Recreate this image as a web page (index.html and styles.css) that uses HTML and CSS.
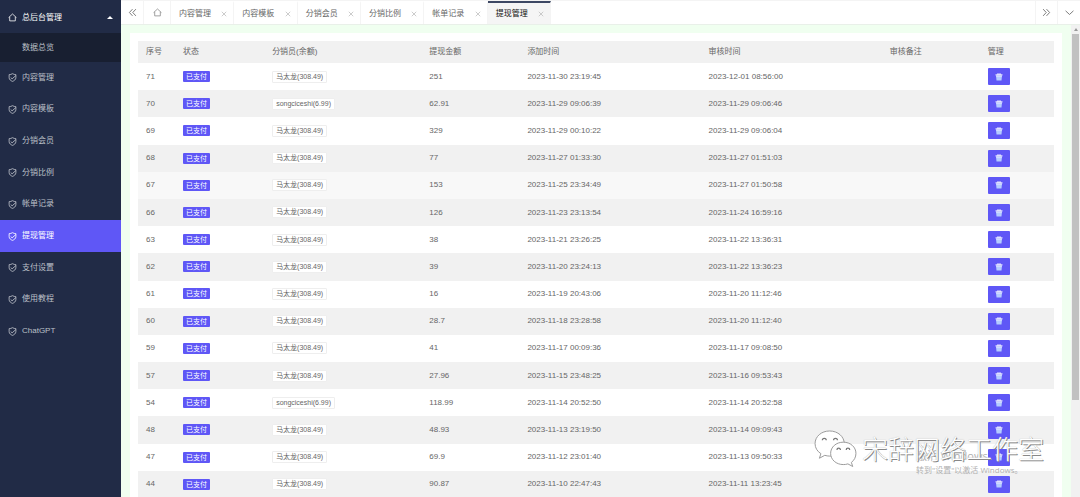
FILE: index.html
```html
<!DOCTYPE html>
<html lang="zh-CN">
<head>
<meta charset="utf-8">
<title>提现管理</title>
<link rel="stylesheet" href="styles.css">
</head>
<body>
<svg class="defs" aria-hidden="true">
  <symbol id="home" viewBox="0 0 16 16"><path d="M1 8.2 8 1.8l7 6.4M3 7v7h10V7" fill="none" stroke="currentColor" stroke-width="1.4" stroke-linejoin="round"/></symbol>
  <symbol id="shield" viewBox="0 0 16 16"><path d="M8 1.2c2 1.300 4 1.700 6 1.700v5.300c0 3.400-3 5.600-6 6.700-3-1.100-6-3.300-6-6.700V2.900c2 0 4-.4 6-1.700zM4.800 8l2.500 2.400L14 4.500" fill="none" stroke="currentColor" stroke-width="1.500" stroke-linejoin="round"/></symbol>
  <symbol id="left" viewBox="0 0 16 16"><path d="M8 2 2.500 8 8 14M14 2 8.500 8l5.500 6" fill="none" stroke="currentColor" stroke-width="1.500"/></symbol>
  <symbol id="right" viewBox="0 0 16 16"><path d="m2 2 5.500 6L2 14M8 2l5.500 6L8 14" fill="none" stroke="currentColor" stroke-width="1.500"/></symbol>
  <symbol id="down" viewBox="0 0 16 16"><path d="m1 5 7 6.500L15 5" fill="none" stroke="currentColor" stroke-width="1.500"/></symbol>
  <symbol id="close" viewBox="0 0 16 16"><path d="m2 2 12 12M14 2 2 14" fill="none" stroke="currentColor" stroke-width="2"/></symbol>
  <symbol id="trash" viewBox="0 0 16 16"><path d="M1 5V2.500h3V1h8v1.500h3V5z" fill="#dfe0ff"/><path d="M2 5h12l-1 10H3z" fill="#b4ccff"/><path d="M2 5h12l-.2 2H2.200z" fill="#e9eaff"/></symbol>
</svg>
<div class="app">
  <aside class="side">
    <a class="side-title" href="#"><svg class="ico"><use href="#home"/></svg><span>总后台管理</span><i class="caret"></i></a>
    <a class="side-sub" href="#">数据总览</a>
    <nav class="menu">
      <a href="#"><svg class="ico"><use href="#shield"/></svg>内容管理</a>
      <a href="#"><svg class="ico"><use href="#shield"/></svg>内容模板</a>
      <a href="#"><svg class="ico"><use href="#shield"/></svg>分销会员</a>
      <a href="#"><svg class="ico"><use href="#shield"/></svg>分销比例</a>
      <a href="#"><svg class="ico"><use href="#shield"/></svg>帐单记录</a>
      <a href="#" class="active"><svg class="ico"><use href="#shield"/></svg>提现管理</a>
      <a href="#"><svg class="ico"><use href="#shield"/></svg>支付设置</a>
      <a href="#"><svg class="ico"><use href="#shield"/></svg>使用教程</a>
      <a href="#"><svg class="ico"><use href="#shield"/></svg>ChatGPT</a>
    </nav>
  </aside>
  <main class="main">
    <header class="bar">
      <button class="nav first" aria-label="向左"><svg class="ico"><use href="#left"/></svg></button>
      <a class="nav home" href="#" aria-label="首页"><svg class="ico"><use href="#home"/></svg></a>
      <div class="tabs">
        <div class="tab"><a href="#">内容管理</a><button aria-label="关闭"><svg><use href="#close"/></svg></button></div>
        <div class="tab"><a href="#">内容模板</a><button aria-label="关闭"><svg><use href="#close"/></svg></button></div>
        <div class="tab"><a href="#">分销会员</a><button aria-label="关闭"><svg><use href="#close"/></svg></button></div>
        <div class="tab"><a href="#">分销比例</a><button aria-label="关闭"><svg><use href="#close"/></svg></button></div>
        <div class="tab"><a href="#">帐单记录</a><button aria-label="关闭"><svg><use href="#close"/></svg></button></div>
        <div class="tab current"><a href="#">提现管理</a><button aria-label="关闭"><svg><use href="#close"/></svg></button></div>
      </div>
      <button class="nav next" aria-label="向右"><svg class="ico"><use href="#right"/></svg></button>
      <button class="nav more" aria-label="更多"><svg class="ico"><use href="#down"/></svg></button>
    </header>
    <div class="body">
      <section class="panel">
        <table class="list">
          <colgroup><col class="c-id"><col class="c-state"><col class="c-user"><col class="c-sum"><col class="c-time"><col class="c-time"><col class="c-note"><col class="c-act"></colgroup>
          <thead><tr><th>序号</th><th>状态</th><th>分销员(余额)</th><th>提现金额</th><th>添加时间</th><th>审核时间</th><th>审核备注</th><th>管理</th></tr></thead>
          <tbody id="rows"></tbody>
        </table>
      </section>
      <div class="scroll" aria-hidden="true"><i class="up"></i><div class="thumb"></div></div>
    </div>
  </main>
</div>
<div class="activate"><p class="big">激活 Windows</p><p>转到"设置"以激活 Windows。</p></div>
<div class="brand">
  <svg viewBox="0 0 44 38" aria-hidden="true">
    <g fill="#fff" stroke="#999" stroke-width="1">
      <path d="M16 1C7.500 1 1 6.700 1 14c0 4.300 2.300 8 6 10.300L5.500 29l5.500-3c1.600.5 3.200.8 5 .8 8.500 0 15-5.700 15-12.800S24.500 1 16 1z"/>
      <path d="M30 12.500c-7.300 0-13 5-13 11.500s5.700 11.500 13 11.500c1.700 0 3.200-.2 4.700-.7l5 2.700-1.400-4.200c2.900-2.100 4.700-5.500 4.700-9.300 0-6.500-5.700-11.500-13-11.500z"/>
    </g>
    <g fill="none" stroke="#777" stroke-width="1.300"><path d="M8.500 10.500a2 2 0 0 1 4 0M20 10.500a2 2 0 0 1 4 0M23.500 20.500a1.800 1.800 0 0 1 3.600 0M33 20.500a1.800 1.800 0 0 1 3.600 0"/></g>
  </svg>
  <span>宋辞网络工作室</span>
</div>
<script src="rows.js"></script>
</body>
</html>
```
FILE: rows.js
```js
const A = '马太龙(308.49)';
const B = 'songciceshi(6.99)';
const data = [
  [71, A, '251', '2023-11-30 23:19:45', '2023-12-01 08:56:00'],
  [70, B, '62.91', '2023-11-29 09:06:39', '2023-11-29 09:06:46'],
  [69, A, '329', '2023-11-29 00:10:22', '2023-11-29 09:06:04'],
  [68, A, '77', '2023-11-27 01:33:30', '2023-11-27 01:51:03'],
  [67, A, '153', '2023-11-25 23:34:49', '2023-11-27 01:50:58'],
  [66, A, '126', '2023-11-23 23:13:54', '2023-11-24 16:59:16'],
  [63, A, '38', '2023-11-21 23:26:25', '2023-11-22 13:36:31'],
  [62, A, '39', '2023-11-20 23:24:13', '2023-11-22 13:36:23'],
  [61, A, '16', '2023-11-19 20:43:06', '2023-11-20 11:12:46'],
  [60, A, '28.7', '2023-11-18 23:28:58', '2023-11-20 11:12:40'],
  [59, A, '41', '2023-11-17 00:09:36', '2023-11-17 09:08:50'],
  [57, A, '27.96', '2023-11-15 23:48:25', '2023-11-16 09:53:43'],
  [54, B, '118.99', '2023-11-14 20:52:50', '2023-11-14 20:52:58'],
  [48, A, '48.93', '2023-11-13 23:19:50', '2023-11-14 09:09:43'],
  [47, A, '69.9', '2023-11-12 23:01:40', '2023-11-13 09:50:33'],
  [44, A, '90.87', '2023-11-10 22:47:43', '2023-11-11 13:23:45']
];
document.getElementById('rows').innerHTML = data.map(([id, user, sum, added, checked]) =>
  `<tr${id === 67 ? ' class="hover"' : ''}><td>${id}</td><td><span class="state">已支付</span></td><td><span class="user">${user}</span></td><td>${sum}</td><td>${added}</td><td>${checked}</td><td></td><td><button class="del" aria-label="删除"><svg><use href="#trash"/></svg></button></td></tr>`
).join('');
```
FILE: styles.css
```css
* { box-sizing: border-box; }
body {
  margin: 0;
  overflow: hidden;
  font: 8px/12px "Liberation Sans", "Noto Sans CJK SC", sans-serif;
  color: #666;
}
a { color: inherit; text-decoration: none; }
button { margin: 0; padding: 0; border: 0; background: none; color: inherit; font: inherit; }
p { margin: 0; }
svg { display: block; }
.defs { position: absolute; width: 0; height: 0; }
.ico { width: 9px; height: 9px; flex: none; }

.app { display: flex; height: 100vh; }
.side { flex: none; width: 121px; background: #212b46; color: #bcc0c8; }
.side-title, .side-sub, .menu a { display: flex; align-items: center; }
.side-title { height: 33px; padding: 2px 8px 0; gap: 5px; color: #fff; }
.side-title span { flex: 1; }
.caret { border: 3px solid transparent; border-top: 0; border-bottom-color: #fff; }
.side-sub { height: 29px; padding-left: 22px; background: #181f31; }
.menu { display: grid; grid-auto-rows: 1fr; height: 285px; }
.menu a { padding-left: 8px; gap: 5px; }
.menu .active { background: #5f57f6; color: #fff; }

.main { flex: 1; min-width: 0; display: flex; flex-direction: column; background: #f0fff0; }
.bar { flex: none; display: flex; height: 25px; background: #fff; border-top: 1px solid #f4f4f4; border-bottom: 1px solid #e9f0e9; }
.nav { flex: none; display: flex; align-items: center; justify-content: center; border-right: 1px solid #f4f4f4; color: #666; }
.first { width: 23px; }
.home { width: 27px; color: #888; }
.next { width: 23px; margin-left: auto; border-left: 1px solid #f4f4f4; }
.more { width: 22px; border-right: 0; }
.tabs { display: flex; width: 380px; }
.tab { flex: 1; display: flex; align-items: center; justify-content: space-between; padding: 0 6px 0 8px; border-top: 2px solid transparent; border-right: 1px solid #f4f4f4; }
.tab button { color: #bbb; }
.tab svg { width: 6px; height: 6px; }
.tab.current { background: #f5f5f5; border-top-color: #3d4864; color: #111; }

.body { flex: 1; min-height: 0; display: flex; }
.panel { flex: 1; margin: 8px 9px 0; padding: 8px 8px 0; background: #fff; overflow: hidden; }
.list { width: 100%; height: 457px; table-layout: fixed; border-collapse: collapse; }
.c-id { width: 37px; }
.c-state { width: 89px; }
.c-user { width: 157px; }
.c-sum { width: 98px; }
.c-time { width: 181px; }
.c-note { width: 98px; }
.c-act { width: 74px; }
th, td { padding: 0 8px; text-align: left; font-weight: 400; white-space: nowrap; }
th { height: 22px; }
td { height: 27px; }
thead tr, tbody tr:nth-child(even) { background: #f1f1f1; }
.hover { background: #f8f8f8; }
.state, .user { display: inline-block; vertical-align: middle; font-size: 7px; border-radius: 1px; }
.state { padding: 0 3px; line-height: 11px; background: #5f57f6; color: #fff; }
.user { padding: 0 3px; line-height: 10px; border: 1px solid #eee; background: #fff; }
.del { display: flex; align-items: center; justify-content: center; width: 22px; height: 17px; border-radius: 1px; background: #5f57f6; }
.del svg { width: 8px; height: 8px; }

.scroll { flex: none; width: 9px; background: #f1f1f1; display: flex; flex-direction: column; align-items: center; padding-top: 3px; gap: 3px; }
.up { border: 2px solid transparent; border-top: 0; border-bottom: 3px solid #999; }
.thumb { width: 7px; height: 78%; margin-bottom: auto; background: #c1c1c1; }

.activate { position: absolute; left: 916px; bottom: 21px; color: #b0b0b0; font: 8px/12px "Open Sans", "Noto Sans CJK SC", sans-serif; }
.activate .big { font-size: 11px; line-height: 16px; }
.brand { position: absolute; right: 36px; bottom: 30px; display: flex; align-items: center; gap: 5px; color: #fff; font: 300 26px/38px "Noto Sans CJK SC", sans-serif; text-shadow: 1px 1px 0 #888, 0 0 1px #aaa; }
.brand svg { width: 43px; height: 37px; }
```
